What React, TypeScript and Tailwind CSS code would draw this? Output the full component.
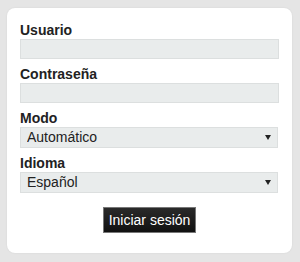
import { useState } from 'react';

const font = { fontFamily: '"Liberation Sans", Arial, sans-serif' };

function Label({ children }: { children: React.ReactNode }) {
  return <label className="block text-[14px] leading-[16px] font-bold text-[#222]">{children}</label>;
}

function Arrow() {
  return (
    <svg className="pointer-events-none absolute right-[7px] top-[8px]" width="6" height="5" viewBox="0 0 6 5">
      <path d="M0 0 H6 L3 5 Z" fill="#222" />
    </svg>
  );
}

export default function App() {
  const [mode, setMode] = useState('auto');
  const [lang, setLang] = useState('es');

  return (
    <div className="w-[300px] h-[262px] bg-[#e5e5e5] pt-[8px] pl-[7px]" style={font}>
      <div className="w-[285px] h-[245px] rounded-[8px] bg-white px-[13px] pt-[14px] shadow-[0_0_2px_rgba(0,0,0,0.08)]">
        <Label>Usuario</Label>
        <input className="mt-[1px] block w-[259px] h-[20px] border border-[#dcdfdf] bg-[#e9ecec] outline-none" />

        <div className="mt-[7px]">
          <Label>Contraseña</Label>
        </div>
        <input type="password" className="mt-[1px] block w-[259px] h-[20px] border border-[#dcdfdf] bg-[#e9ecec] outline-none" />

        <div className="mt-[7px]">
          <Label>Modo</Label>
        </div>
        <div className="relative mt-[1px] w-[258px]">
          <select
            value={mode}
            onChange={e => setMode(e.target.value)}
            className="block w-[258px] h-[21px] appearance-none border border-[#dcdfdf] bg-[#e9ecec] pl-[6px] text-[14px] leading-[19px] text-[#222] outline-none"
          >
            <option value="auto">Automático</option>
            <option value="manual">Manual</option>
          </select>
          <Arrow />
        </div>

        <div className="mt-[7px]">
          <Label>Idioma</Label>
        </div>
        <div className="relative mt-[1px] w-[258px]">
          <select
            value={lang}
            onChange={e => setLang(e.target.value)}
            className="block w-[258px] h-[21px] appearance-none border border-[#dcdfdf] bg-[#e9ecec] pl-[6px] text-[14px] leading-[19px] text-[#222] outline-none"
          >
            <option value="es">Español</option>
            <option value="en">English</option>
          </select>
          <Arrow />
        </div>

        <div className="mt-[14px] flex justify-center">
          <button className="h-[26px] w-[93px] border border-[#777] bg-[linear-gradient(#2a2a2a,#111)] text-[14px] leading-[24px] text-white">
            Iniciar sesión
          </button>
        </div>
      </div>
    </div>
  );
}
